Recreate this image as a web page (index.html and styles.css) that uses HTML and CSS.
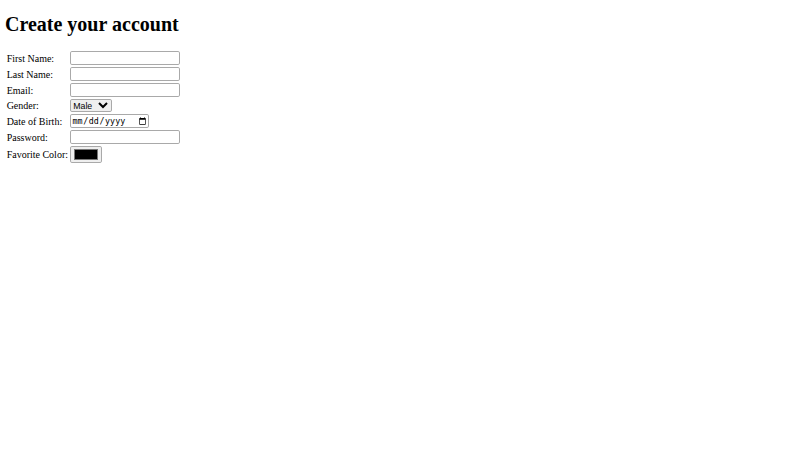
FILE: index.html
```html
<!DOCTYPE html>
<html lang="en">
<head>
<meta charset="utf-8">
<title>Create your account</title>
<link rel="stylesheet" href="styles.css">
</head>
<body class="page">
<div class="sheet">
  <h1 class="title">Create your account</h1>
  <form class="signup">
    <table class="fields">
      <tr>
        <td><label for="first">First Name:</label></td>
        <td><input class="text" type="text" id="first" name="first"></td>
      </tr>
      <tr>
        <td><label for="last">Last Name:</label></td>
        <td><input class="text" type="text" id="last" name="last"></td>
      </tr>
      <tr>
        <td><label for="email">Email:</label></td>
        <td><input class="text" type="email" id="email" name="email"></td>
      </tr>
      <tr>
        <td><label for="gender">Gender:</label></td>
        <td>
          <select class="choice" id="gender" name="gender">
            <option>Male</option>
            <option>Female</option>
            <option>Other</option>
          </select>
        </td>
      </tr>
      <tr>
        <td><label for="dob">Date of Birth:</label></td>
        <td><input class="date" type="date" id="dob" name="dob"></td>
      </tr>
      <tr>
        <td><label for="pw">Password:</label></td>
        <td><input class="text" type="password" id="pw" name="pw"></td>
      </tr>
      <tr>
        <td><label for="color">Favorite Color:</label></td>
        <td><input class="swatch" type="color" id="color" name="color" value="#000000"></td>
      </tr>
    </table>
  </form>
</div>
</body>
</html>
```

FILE: styles.css
```css
.page {
  margin: 0 5px 5px;
  background: #ffffff;
  color: #000000;
  font-family: "Liberation Serif", "Times New Roman", serif;
}

.sheet {
  zoom: 0.625;
}

.title {
  font-size: 32px;
  font-weight: bold;
  margin: 21.44px 0;
}

.signup {
  margin: 0;
}

.fields {
  border-spacing: 2px;
}

.fields td {
  padding: 1px;
}

.text {
  box-sizing: border-box;
  width: 176px;
  height: 22px;
  border: 2px solid #a9a9a9;
  border-radius: 3px;
  background: #ffffff;
}

.choice {
  box-sizing: border-box;
  width: 67px;
  height: 20px;
  border: 2px solid #a9a9a9;
  border-radius: 3px;
  font-family: "Liberation Sans", Arial, sans-serif;
  font-size: 14px;
}

.date {
  box-sizing: border-box;
  width: 126px;
  height: 22px;
  border: 2px solid #a9a9a9;
  border-radius: 3px;
}

.swatch {
  box-sizing: border-box;
  width: 50px;
  height: 27px;
  border: 2px solid #a9a9a9;
  border-radius: 3px;
  padding: 1px 2px;
  background: #efefef;
}

.swatch::-webkit-color-swatch-wrapper {
  padding: 2px;
}

.swatch::-webkit-color-swatch {
  border: 1px solid #777777;
}
```
